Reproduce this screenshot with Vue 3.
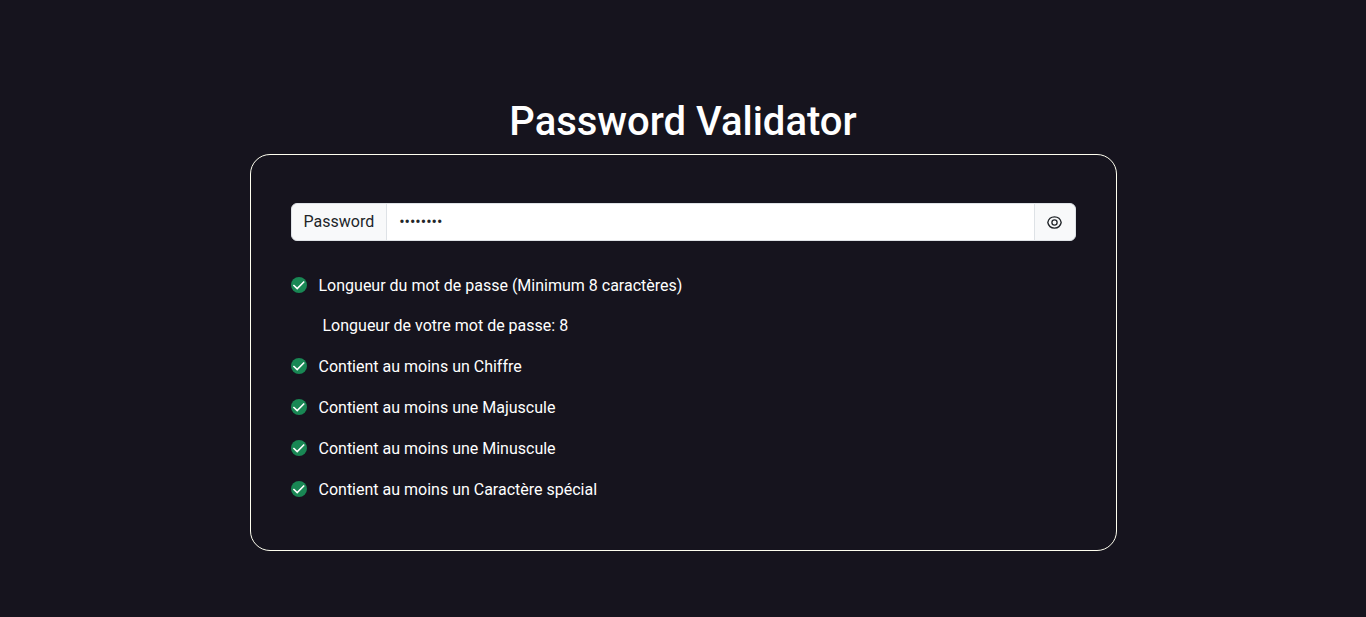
<script setup>
import { computed, ref } from 'vue'

const password = ref('Abcde12!')
const visible = ref(false)

const rules = computed(() => [
  {
    label: 'Longueur du mot de passe (Minimum 8 caractères)',
    detail: `Longueur de votre mot de passe: ${password.value.length}`,
    ok: password.value.length >= 8
  },
  { label: 'Contient au moins un Chiffre', ok: /\d/.test(password.value) },
  { label: 'Contient au moins une Majuscule', ok: /[A-Z]/.test(password.value) },
  { label: 'Contient au moins une Minuscule', ok: /[a-z]/.test(password.value) },
  { label: 'Contient au moins un Caractère spécial', ok: /[^A-Za-z0-9]/.test(password.value) }
])
</script>

<template>
  <main class="page">
    <h1 class="title">Password Validator</h1>
    <section class="card">
      <div class="input-group">
        <label class="addon" for="password">Password</label>
        <input id="password" v-model="password" class="field" :type="visible ? 'text' : 'password'" />
        <button class="addon toggle" type="button" aria-label="Afficher le mot de passe" @click="visible = !visible">
          <svg width="16" height="16" viewBox="0 0 16 16" fill="none" stroke="currentColor" stroke-width="1.3" aria-hidden="true">
            <path d="M0.8 8.5C1.5 5.1 4.1 2.9 7.5 2.9S13.5 5.1 14.2 8.5C13.5 11.9 10.9 14.1 7.5 14.1S1.5 11.9 0.8 8.5Z" stroke-linejoin="round" />
            <circle cx="7.5" cy="8.5" r="2.6" />
          </svg>
        </button>
      </div>
      <ul class="rules">
        <template v-for="rule in rules" :key="rule.label">
          <li class="rule">
            <svg class="icon" :class="{ failed: !rule.ok }" width="16" height="16" viewBox="0 0 16 16" aria-hidden="true">
              <circle cx="8" cy="8" r="8" fill="currentColor" />
              <path v-if="rule.ok" d="M2.4 8L6.2 11.6L13.2 4.5" fill="none" stroke="#fff" stroke-width="1.6" />
              <path v-else d="M5 5L11 11M11 5L5 11" fill="none" stroke="#fff" stroke-width="1.6" />
            </svg>
            <span>{{ rule.label }}</span>
          </li>
          <li v-if="rule.detail" class="detail">{{ rule.detail }}</li>
        </template>
      </ul>
    </section>
  </main>
</template>

<style>
body {
  margin: 0;
  background: #16141e;
}
</style>

<style scoped>
.page {
  box-sizing: border-box;
  min-height: 100vh;
  padding: 98px 16px 64px;
  color: #fff;
  background: #16141e;
  font-family: Roboto, "Liberation Sans", sans-serif;
  font-size: 16px;
  line-height: 24px;
}

.title {
  margin: 0 0 8px;
  font-size: 40px;
  font-weight: 500;
  line-height: 48px;
  text-align: center;
}

.card {
  box-sizing: border-box;
  max-width: 867px;
  margin: 0 auto;
  padding: 48px 40px;
  border: 1px solid ivory;
  border-radius: 20px;
}

.input-group {
  display: flex;
  margin-bottom: 32px;
}

.addon,
.field {
  box-sizing: border-box;
  margin: 0;
  padding: 6px 12px;
  border: 1px solid #dee2e6;
  color: #212529;
  font: inherit;
}

.addon {
  background: #f8f9fa;
  border-radius: 6px 0 0 6px;
}

.field {
  flex: 1;
  min-width: 0;
  margin-left: -1px;
  background: #fff;
  border-radius: 0;
}

.toggle {
  display: flex;
  align-items: center;
  margin-left: -1px;
  border-radius: 0 6px 6px 0;
  cursor: pointer;
}

.rules {
  display: grid;
  gap: 16px;
  margin: 0;
  padding: 0;
  list-style: none;
}

.rule {
  display: flex;
  align-items: center;
  gap: 12px;
  padding-top: 1px;
}

.icon {
  flex: none;
  margin-bottom: 2px;
  color: #198754;
}

.failed {
  color: #dc3545;
}

.detail {
  padding-left: 32px;
}
</style>
